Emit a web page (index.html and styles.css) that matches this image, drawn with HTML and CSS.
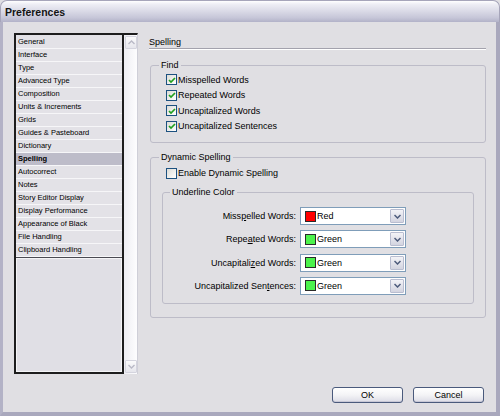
FILE: index.html
```html
<!DOCTYPE html>
<html>
<head>
<meta charset="utf-8">
<link rel="stylesheet" href="styles.css">
</head>
<body>
<div class="window">
  <div class="titlebar"><span class="title">Preferences</span></div>
  <div class="frame">
    <div class="main">
      <div class="listbox">
        <div class="list">
          <div class="item">General</div>
          <div class="item">Interface</div>
          <div class="item">Type</div>
          <div class="item">Advanced Type</div>
          <div class="item">Composition</div>
          <div class="item">Units &amp; Increments</div>
          <div class="item">Grids</div>
          <div class="item">Guides &amp; Pasteboard</div>
          <div class="item">Dictionary</div>
          <div class="item selected">Spelling</div>
          <div class="item">Autocorrect</div>
          <div class="item">Notes</div>
          <div class="item">Story Editor Display</div>
          <div class="item">Display Performance</div>
          <div class="item">Appearance of Black</div>
          <div class="item">File Handling</div>
          <div class="item">Clipboard Handling</div>
          <div class="list-empty"></div>
        </div>
        <div class="scrollbar">
          <div class="sb-btn"><svg width="7" height="5" viewBox="0 0 7 5"><polyline points="0.5,4 3.5,1 6.5,4" fill="none" stroke="#b9b9c6" stroke-width="1.4"/></svg></div>
          <div class="sb-track"></div>
          <div class="sb-btn"><svg width="7" height="5" viewBox="0 0 7 5"><polyline points="0.5,1 3.5,4 6.5,1" fill="none" stroke="#b9b9c6" stroke-width="1.4"/></svg></div>
        </div>
      </div>
      <div class="panel">
        <div class="panel-title">Spelling</div>
        <fieldset class="group find">
          <legend>Find</legend>
          <label class="check"><span class="box"><svg width="8" height="8" viewBox="0 0 8 8"><polyline points="1,4 3,6 7,2" fill="none" stroke="#21a121" stroke-width="1.7"/></svg></span>Misspelled Words</label>
          <label class="check"><span class="box"><svg width="8" height="8" viewBox="0 0 8 8"><polyline points="1,4 3,6 7,2" fill="none" stroke="#21a121" stroke-width="1.7"/></svg></span>Repeated Words</label>
          <label class="check"><span class="box"><svg width="8" height="8" viewBox="0 0 8 8"><polyline points="1,4 3,6 7,2" fill="none" stroke="#21a121" stroke-width="1.7"/></svg></span>Uncapitalized Words</label>
          <label class="check"><span class="box"><svg width="8" height="8" viewBox="0 0 8 8"><polyline points="1,4 3,6 7,2" fill="none" stroke="#21a121" stroke-width="1.7"/></svg></span>Uncapitalized Sentences</label>
        </fieldset>
        <fieldset class="group dyn">
          <legend>Dynamic Spelling</legend>
          <label class="check enable"><span class="box"></span>Enable Dynamic Spelling</label>
          <fieldset class="group underline">
            <legend>Underline Color</legend>
            <div class="color-grid">
              <span class="lbl">Miss<u>p</u>elled Words:</span>
              <div class="combo"><span class="swatch red"></span><span class="val">Red</span><span class="drop"><svg width="7" height="5" viewBox="0 0 7 5"><polyline points="0.5,1 3.5,4 6.5,1" fill="none" stroke="#4d5b7c" stroke-width="1.5"/></svg></span></div>
              <span class="lbl">Repe<u>a</u>ted Words:</span>
              <div class="combo"><span class="swatch green"></span><span class="val">Green</span><span class="drop"><svg width="7" height="5" viewBox="0 0 7 5"><polyline points="0.5,1 3.5,4 6.5,1" fill="none" stroke="#4d5b7c" stroke-width="1.5"/></svg></span></div>
              <span class="lbl">Uncapitali<u>z</u>ed Words:</span>
              <div class="combo"><span class="swatch green"></span><span class="val">Green</span><span class="drop"><svg width="7" height="5" viewBox="0 0 7 5"><polyline points="0.5,1 3.5,4 6.5,1" fill="none" stroke="#4d5b7c" stroke-width="1.5"/></svg></span></div>
              <span class="lbl">Uncapitalized Sen<u>t</u>ences:</span>
              <div class="combo"><span class="swatch green"></span><span class="val">Green</span><span class="drop"><svg width="7" height="5" viewBox="0 0 7 5"><polyline points="0.5,1 3.5,4 6.5,1" fill="none" stroke="#4d5b7c" stroke-width="1.5"/></svg></span></div>
            </div>
          </fieldset>
        </fieldset>
      </div>
    </div>
    <div class="buttons">
      <button class="btn">OK</button>
      <button class="btn">Cancel</button>
    </div>
  </div>
</div>
</body>
</html>
```

FILE: styles.css
```css
* { box-sizing: border-box; }
html, body { margin: 0; padding: 0; }
body {
  width: 500px;
  height: 416px;
  overflow: hidden;
  background: #e0dfe3;
  font-family: "Liberation Sans", Arial, sans-serif;
  font-size: 9px;
  color: #000;
}
.window {
  width: 500px;
  height: 416px;
  display: flex;
  flex-direction: column;
}
.titlebar {
  height: 22px;
  flex: none;
  border-radius: 7px 7px 0 0;
  background: linear-gradient(#ffffff 0%, #eeeef5 15%, #dcdce8 45%, #c6c6d8 80%, #b2b2c8 100%);
  border: 1px solid #a6a5ba;
  border-bottom: none;
  display: flex;
  align-items: center;
  padding-left: 4px;
}
.title {
  font-weight: bold;
  font-size: 10.5px;
  color: #141414;
  padding-top: 1px;
}
.frame {
  flex: 1;
  border-left: 3px solid #b3b2c6;
  border-right: 4px solid #a9a8bd;
  border-bottom: 4px solid #a9a8bd;
  background: #e0dfe3;
  display: flex;
  flex-direction: column;
}
.main {
  display: flex;
  padding: 11px 10px 0 11px;
  height: 352px;
}
.listbox {
  width: 124px;
  height: 341px;
  display: flex;
  border-top: 2px solid #1d1d1d;
  border-right: 1px solid #cfcfd8;
  flex: none;
}
.list {
  width: 110px;
  border-left: 2px solid #1d1d1d;
  border-right: 2px solid #1d1d1d;
  border-bottom: 2px solid #1d1d1d;
  padding-top: 1px;
  display: flex;
  flex-direction: column;
  background: #e2e1e6;
}
.item {
  height: 13px;
  line-height: 12px;
  font-size: 7.5px;
  padding-left: 2px;
  border-bottom: 1px solid #f6f6f8;
  background: #e3e2e7;
  white-space: nowrap;
}
.item.selected {
  background: #bdbcc9;
  font-weight: bold;
}
.list-empty {
  flex: 1;
  border-top: 1px solid #4a4a52;
  box-shadow: inset 1px 1px 0 #f4f4f6, inset -1px -1px 0 #f4f4f6;
  background: #e0dfe5;
}
.scrollbar {
  width: 13px;
  display: flex;
  flex-direction: column;
  background: linear-gradient(90deg, #eeeef3, #fdfdfe);
  padding-bottom: 1px;
}
.sb-btn {
  height: 13px;
  margin: 1px 0 0 1px;
  width: 12px;
  border: 1px solid #d4d4de;
  border-radius: 1px;
  background: linear-gradient(#fbfbfc, #e6e6ec);
  display: flex;
  align-items: center;
  justify-content: center;
}
.sb-track { flex: 1; }
.panel {
  width: 338px;
  margin-left: 11px;
  display: flex;
  flex-direction: column;
}
.panel-title {
  padding-top: 3px;
  line-height: 12px;
  height: 16px;
  border-bottom: 1px solid #a3a2ad;
  box-shadow: 0 1px 0 #ffffff;
}
.group {
  margin: 0;
  border: 1px solid #bdbcc8;
  border-radius: 3px;
  padding: 0 8px;
  min-width: 0;
}
.group legend {
  padding: 0 2px;
  line-height: 12px;
  font-size: 9px;
}
.find {
  margin: 10px 0 0 1px;
  padding-top: 1px;
  padding-bottom: 8px;
}
.check {
  display: flex;
  align-items: center;
  height: 15.5px;
  margin-left: 7px;
  white-space: nowrap;
}
.box {
  width: 11px;
  height: 11px;
  border: 1px solid #1c5180;
  background: linear-gradient(135deg, #dcdcd7, #ffffff);
  margin-right: 1px;
  display: flex;
  align-items: center;
  justify-content: center;
  flex: none;
}
.dyn {
  margin: 8px 0 0 1px;
  padding-top: 2px;
  padding-bottom: 13px;
}
.enable { height: 16px; }
.underline {
  margin: 5px 3px 0 3px;
  padding: 9px 0 8px 7px;
}
.underline legend { margin-left: 0; }
.color-grid {
  display: grid;
  grid-template-columns: 126px 106px;
  grid-auto-rows: 18px;
  column-gap: 4px;
  row-gap: 5.3px;
  align-items: center;
}
.lbl {
  text-align: right;
  white-space: nowrap;
}
.lbl u { text-underline-offset: 1px; }
.combo {
  height: 18px;
  border: 1px solid #7f9db9;
  background: #fff;
  display: flex;
  align-items: center;
  padding-left: 4px;
}
.swatch {
  width: 11px;
  height: 11px;
  border: 1px solid #2a2a2a;
  margin-right: 1px;
  flex: none;
}
.swatch.red { background: #ff0000; }
.swatch.green { background: #4cf24c; }
.val { flex: 1; }
.drop {
  width: 14px;
  height: 14px;
  margin-right: 1px;
  border: 1px solid #b9bdd0;
  border-radius: 1px;
  background: linear-gradient(#f3f3f7, #d3d4e0);
  display: flex;
  align-items: center;
  justify-content: center;
}
.buttons {
  display: flex;
  justify-content: flex-end;
  gap: 10px;
  padding: 13px 12px 0 0;
}
.btn {
  width: 71px;
  height: 16px;
  padding: 0;
  font-family: "Liberation Sans", Arial, sans-serif;
  font-size: 9px;
  color: #000;
  border: 1px solid #4a5a7c;
  border-radius: 3px;
  background: linear-gradient(#ffffff 0%, #f4f4f6 50%, #dcdce6 100%);
  box-shadow: inset 0 -1px 0 #c8c8d6;
}
```
